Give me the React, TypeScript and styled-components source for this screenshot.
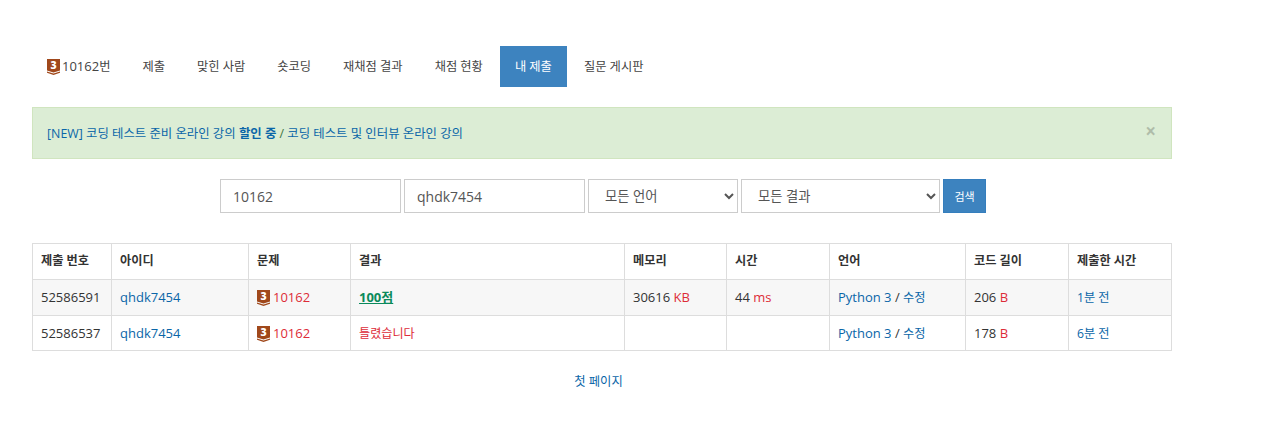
import styled, { createGlobalStyle } from "styled-components";

const tabs = ["제출", "맞힌 사람", "숏코딩", "재채점 결과", "채점 현황", "내 제출", "질문 게시판"];

const columns = [
  { label: "제출 번호", width: 79 },
  { label: "아이디", width: 137 },
  { label: "문제", width: 102 },
  { label: "결과", width: 274 },
  { label: "메모리", width: 102 },
  { label: "시간", width: 103 },
  { label: "언어", width: 136 },
  { label: "코드 길이", width: 103 },
  { label: "제출한 시간", width: 103 },
];

const rows = [
  { id: "52586591", ok: true, memory: "30616", time: "44", length: "206", ago: "1분 전" },
  { id: "52586537", ok: false, memory: "", time: "", length: "178", ago: "6분 전" },
];

function TierBadge() {
  return (
    <Badge viewBox="0 -2 13 20">
      <path d="M0 0H13V11.4L6.5 13.4L0 11.4Z" fill="#a0481b" />
      <path d="M0 12.6L6.5 14.6L13 12.6V13.8L6.5 16L0 13.8Z" fill="#a0481b" />
      <text x="6.5" y="10" textAnchor="middle" fontSize="10.5" fontWeight="800" fill="#fff">
        3
      </text>
    </Badge>
  );
}

export default function App() {
  return (
    <Page>
      <GlobalStyle />
      <Tabs>
        <Tab>
          <TierBadge />
          <TabNumber>10162</TabNumber>번
        </Tab>
        {tabs.map((tab) => (
          <Tab key={tab} $active={tab === "내 제출"}>
            {tab}
          </Tab>
        ))}
      </Tabs>

      <Alert>
        <span>
          <AlertLink>[NEW] 코딩 테스트 준비 온라인 강의 <b>할인 중</b></AlertLink> /{" "}
          <AlertLink>코딩 테스트 및 인터뷰 온라인 강의</AlertLink>
        </span>
        <Close>×</Close>
      </Alert>

      <SearchForm>
        <Input $width={181} defaultValue="10162" />
        <Input $width={181} defaultValue="qhdk7454" />
        <Select $width={150}>
          <option>모든 언어</option>
        </Select>
        <Select $width={199}>
          <option>모든 결과</option>
        </Select>
        <SearchButton>검색</SearchButton>
      </SearchForm>

      <Table>
        <thead>
          <tr>
            {columns.map((col) => (
              <Th key={col.label} $width={col.width}>
                {col.label}
              </Th>
            ))}
          </tr>
        </thead>
        <tbody>
          {rows.map((row) => (
            <Tr key={row.id}>
              <Td>{row.id}</Td>
              <Td>
                <Link>qhdk7454</Link>
              </Td>
              <Td>
                <ProblemCell>
                  <TierBadge />
                  <Red>10162</Red>
                </ProblemCell>
              </Td>
              <Td>{row.ok ? <Score>100점</Score> : <Fail>틀렸습니다</Fail>}</Td>
              <Td>
                {row.memory && (
                  <>
                    {row.memory} <Red>KB</Red>
                  </>
                )}
              </Td>
              <Td>
                {row.time && (
                  <>
                    {row.time} <Red>ms</Red>
                  </>
                )}
              </Td>
              <Td>
                <Link>Python 3</Link> / <KoreanLink>수정</KoreanLink>
              </Td>
              <Td>
                {row.length} <Red>B</Red>
              </Td>
              <Td>
                <KoreanLink>{row.ago}</KoreanLink>
              </Td>
            </Tr>
          ))}
        </tbody>
      </Table>

      <Pager>
        <PagerLink>첫 페이지</PagerLink>
      </Pager>
    </Page>
  );
}

const GlobalStyle = createGlobalStyle`
  * {
    box-sizing: border-box;
  }
  body {
    margin: 0;
    background: #fff;
    color: #333;
    font-family: "Open Sans", "Noto Sans CJK KR", sans-serif;
    font-size: 13px;
  }
`;

const Page = styled.div`
  width: 1140px;
  margin-left: 32px;
  padding-top: 46px;
`;

const Tabs = styled.div`
  display: flex;
  height: 41px;
`;

const Tab = styled.div<{ $active?: boolean }>`
  display: flex;
  align-items: center;
  padding: 0 15px 2px;
  font-size: 12.25px;
  color: ${(p) => (p.$active ? "#fff" : "#444")};
  background: ${(p) => (p.$active ? "#3d83bf" : "transparent")};
  margin-right: 2px;
  svg {
    margin-right: 2px;
  }
`;

const TabNumber = styled.span`
  font-size: 13px;
`;

const Badge = styled.svg`
  width: 13px;
  height: 20px;
  margin-top: 2px;
  flex-shrink: 0;
  text {
    font-family: "Open Sans", sans-serif;
  }
`;

const Alert = styled.div`
  position: relative;
  display: flex;
  align-items: center;
  height: 52px;
  margin-top: 20px;
  padding: 0 14px;
  background: #dcedd5;
  border: 1px solid #d0e5bf;
  font-size: 12.4px;
  color: #3c763d;
`;

const AlertLink = styled.a`
  color: #0a66a8;
`;

const Close = styled.span`
  position: absolute;
  right: 15px;
  top: 13px;
  font-size: 19px;
  font-weight: 700;
  line-height: 20px;
  color: #000;
  opacity: 0.2;
`;

const SearchForm = styled.div`
  display: flex;
  justify-content: center;
  gap: 3px;
  margin-top: 20px;
  padding-left: 2px;
`;

const Input = styled.input<{ $width: number }>`
  width: ${(p) => p.$width}px;
  height: 34px;
  padding: 6px 12px;
  border: 1px solid #ccc;
  background: #fff;
  color: #555;
  font-family: inherit;
  font-size: 14px;
  outline: none;
`;

const Select = styled.select<{ $width: number }>`
  width: ${(p) => p.$width}px;
  height: 34px;
  padding: 6px 12px;
  border: 1px solid #ccc;
  border-radius: 0;
  background: #fff;
  color: #555;
  font-family: inherit;
  font-size: 13.3px;
`;

const SearchButton = styled.button`
  width: 43px;
  height: 34px;
  border: 1px solid #357ebd;
  border-radius: 0;
  background: #3d83bf;
  color: #fff;
  font-family: inherit;
  font-size: 11px;
  padding: 0;
`;

const Table = styled.table`
  width: 1139px;
  margin-top: 30px;
  table-layout: fixed;
  border-collapse: collapse;
`;

const Th = styled.th<{ $width: number }>`
  width: ${(p) => p.$width}px;
  height: 36px;
  padding: 0 8px 3px;
  border: 1px solid #ddd;
  font-size: 12.2px;
  font-weight: 700;
  text-align: left;
`;

const Tr = styled.tr`
  &:nth-child(odd) {
    background: #f7f7f7;
  }
`;

const Td = styled.td`
  height: 36px;
  padding: 0 8px 2px;
  border: 1px solid #ddd;
  font-size: 13px;
  white-space: nowrap;
  tr:last-child > & {
    height: 35px;
    padding-bottom: 0;
  }
`;

const Link = styled.a`
  color: #0a66a8;
`;

const KoreanLink = styled(Link)`
  font-size: 12.2px;
`;

const Red = styled.span`
  color: #dd2c38;
`;

const Fail = styled(Red)`
  font-size: 12.1px;
`;

const ProblemCell = styled.span`
  display: flex;
  align-items: center;
  gap: 3px;
`;

const Score = styled.span`
  color: #0a8a5c;
  font-weight: 700;
  text-decoration: underline;
`;

const Pager = styled.div`
  display: flex;
  justify-content: center;
  margin-top: 21px;
  padding-right: 7px;
`;

const PagerLink = styled.a`
  color: #0a66a8;
  font-size: 12.3px;
`;
